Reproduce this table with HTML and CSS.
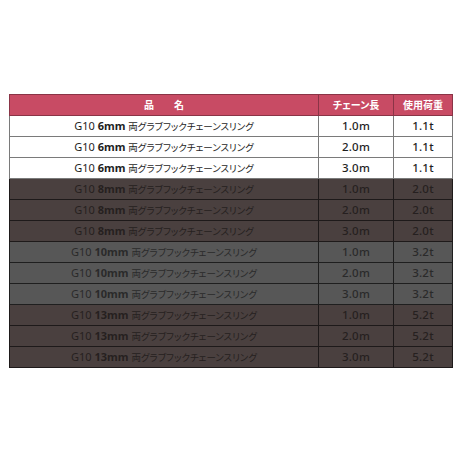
FILE: index.html
```html
<!DOCTYPE html>
<html lang="ja">
<head>
<meta charset="utf-8">
<link rel="stylesheet" href="styles.css">
</head>
<body>
<table class="spec">
<thead>
<tr><th class="c-name">品　　名</th><th class="c-len">チェーン長</th><th class="c-load">使用荷重</th></tr>
</thead>
<tbody>
<tr class="w"><td class="name">G10 <b>6mm</b> <span class="jp">両グラブフックチェーンスリング</span></td><td>1.0m</td><td>1.1t</td></tr>
<tr class="w"><td class="name">G10 <b>6mm</b> <span class="jp">両グラブフックチェーンスリング</span></td><td>2.0m</td><td>1.1t</td></tr>
<tr class="w"><td class="name">G10 <b>6mm</b> <span class="jp">両グラブフックチェーンスリング</span></td><td>3.0m</td><td>1.1t</td></tr>
<tr class="br"><td class="name">G10 <b>8mm</b> <span class="jp">両グラブフックチェーンスリング</span></td><td>1.0m</td><td>2.0t</td></tr>
<tr class="br"><td class="name">G10 <b>8mm</b> <span class="jp">両グラブフックチェーンスリング</span></td><td>2.0m</td><td>2.0t</td></tr>
<tr class="br"><td class="name">G10 <b>8mm</b> <span class="jp">両グラブフックチェーンスリング</span></td><td>3.0m</td><td>2.0t</td></tr>
<tr class="gr"><td class="name">G10 <b>10mm</b> <span class="jp">両グラブフックチェーンスリング</span></td><td>1.0m</td><td>3.2t</td></tr>
<tr class="gr"><td class="name">G10 <b>10mm</b> <span class="jp">両グラブフックチェーンスリング</span></td><td>2.0m</td><td>3.2t</td></tr>
<tr class="gr"><td class="name">G10 <b>10mm</b> <span class="jp">両グラブフックチェーンスリング</span></td><td>3.0m</td><td>3.2t</td></tr>
<tr class="br"><td class="name">G10 <b>13mm</b> <span class="jp">両グラブフックチェーンスリング</span></td><td>1.0m</td><td>5.2t</td></tr>
<tr class="br"><td class="name">G10 <b>13mm</b> <span class="jp">両グラブフックチェーンスリング</span></td><td>2.0m</td><td>5.2t</td></tr>
<tr class="br"><td class="name">G10 <b>13mm</b> <span class="jp">両グラブフックチェーンスリング</span></td><td>3.0m</td><td>5.2t</td></tr>
</tbody>
</table>
</body>
</html>
```
FILE: styles.css
```css
html, body {
  margin: 0;
  padding: 0;
  background: #ffffff;
}
body {
  padding: 94px 0 0 9px;
  font-family: "Noto Sans", "Noto Sans CJK JP", sans-serif;
}
.spec {
  border-collapse: collapse;
  width: 440px;
  table-layout: fixed;
}
.spec th, .spec td {
  height: 20px;
  padding: 0;
  text-align: center;
  vertical-align: middle;
  line-height: 20px;
  white-space: nowrap;
  overflow: hidden;
}
.spec th {
  background: #c84b64;
  color: #ffffff;
  font-family: "Noto Sans CJK JP", sans-serif;
  font-size: 10px;
  font-weight: bold;
  border: 1px solid #8a3446;
  font-feature-settings: "palt";
}
.c-name { width: 308px; }
.c-len { width: 74px; }
.c-load { width: 58px; }
.spec td {
  font-size: 11.5px;
  font-weight: 500;
  letter-spacing: 0.2px;
}
.spec td.name {
  font-size: 11px;
  font-weight: normal;
  letter-spacing: 0;
}
.spec td b {
  font-weight: bold;
}
.jp {
  font-family: "Noto Sans CJK JP", sans-serif;
  font-size: 9.5px;
  font-feature-settings: "palt";
  letter-spacing: 0;
}
.w td {
  background: #ffffff;
  color: #1e1e1e;
  border: 1px solid #7a7a7a;
}
.br td {
  background: #4a403f;
  color: #262020;
  border: 1px solid #1e1a1a;
}
.gr td {
  background: #575757;
  color: #2a2a2a;
  border: 1px solid #1f1f1f;
}
```
